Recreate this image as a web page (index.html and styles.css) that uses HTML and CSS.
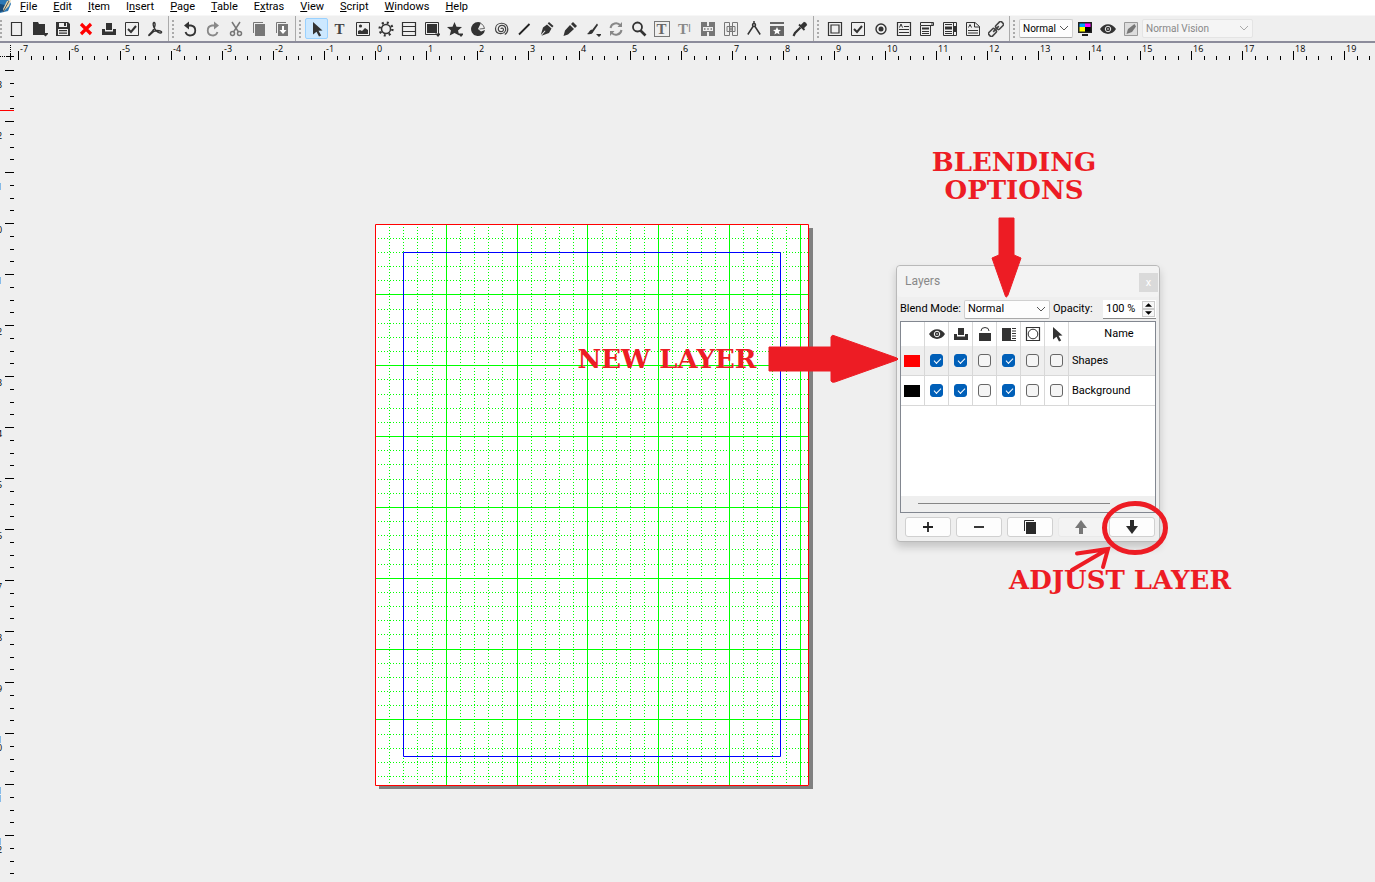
FILE: index.html
```html
<!DOCTYPE html>
<html lang="en">
<head>
<meta charset="utf-8">
<title>Layers</title>
<link rel="stylesheet" href="styles.css">
</head>
<body>
<svg class="sprite" aria-hidden="true">
  <symbol id="new" viewBox="0 0 16 16"><path d="M2.500 1.500h10v13h-10z" fill="none" stroke="#333" stroke-width="1.200"/></symbol>
  <symbol id="open" viewBox="0 0 16 16"><path d="M1 1h5l1 2h6v11H1zM10 12h7l-3.500 3.500z"/></symbol>
  <symbol id="save" viewBox="0 0 16 16"><path fill-rule="evenodd" d="M1 1h12l2 2v12H1zM4 2v4h8V2zM3 8v6h10V8z"/><path d="M9 2h2v3H9zM4 9h8v1.200H4zM4 11.500h8v1.200H4z"/></symbol>
  <symbol id="close" viewBox="0 0 16 16"><path d="M3 3l10 10M13 3L3 13" stroke="#f00" stroke-width="3.200"/></symbol>
  <symbol id="print" viewBox="0 0 16 16"><path d="M5 2h6v7H5zM1 8h3v2.500h8V8h3v6H1z"/></symbol>
  <symbol id="check" viewBox="0 0 16 16"><path d="M1.500 1.500h13v13h-13z" fill="none" stroke="#333"/><path d="M4 8l3 3 5-6" fill="none" stroke="#333" stroke-width="2"/></symbol>
  <symbol id="pdf" viewBox="0 0 16 16"><path d="M7 1.500c2 0 1 5-1 8s-5 4.500-4 5c1.500 0 3-5 8-5 3 0 5 1 4.500 2-1 1.500-6-1-7.500-5C6 4 6 2 7 1.500z" fill="none" stroke="#333" stroke-width="1.400"/></symbol>
  <symbol id="undo" viewBox="0 0 16 16"><path d="M5 4.500h4a5 5 0 1 1-5.500 6.500" fill="none" stroke="#333" stroke-width="1.800"/><path d="M2 4.500L7 .5v8z"/></symbol>
  <symbol id="redo" viewBox="0 0 16 16"><path d="M11 4.500H7a5 5 0 1 0 5.500 6.500" fill="none" stroke="#888" stroke-width="1.800"/><path d="M14 4.500L9 .5v8z" fill="#888"/></symbol>
  <symbol id="cut" viewBox="0 0 16 16"><g fill="none" stroke="#777" stroke-width="1.500"><path d="M4 1l6.500 10M12 1L5.500 11"/><circle cx="4.500" cy="12.500" r="2"/><circle cx="11.500" cy="12.500" r="2"/></g></symbol>
  <symbol id="copy" viewBox="0 0 16 16"><path d="M2.500 12V1.500H12" fill="none" stroke="currentColor"/><path d="M4 3h10v12H4z" fill="currentColor"/></symbol>
  <symbol id="paste" viewBox="0 0 16 16"><path d="M2.500 12V1.500H12" fill="none" stroke="#777"/><path d="M4 3h10v12H4z" fill="#777"/><path d="M8 5h2v4h2.500L9 13 5.500 9H8z" fill="#fff"/></symbol>
  <symbol id="arrow" viewBox="0 0 16 16"><path d="M4 1l9.500 8.500-4 .3 2.700 4.600-2.200 1.100-2.500-4.800L4 13.500z"/></symbol>
  <symbol id="image" viewBox="0 0 16 16"><path d="M1.500 1.500h13v13h-13z" fill="none" stroke="#333"/><path d="M3 13v-3l2-1 2 1 3-3 3 2v4z"/><circle cx="5.500" cy="5" r="1.600"/></symbol>
  <symbol id="gear" viewBox="0 0 16 16"><g fill="none" stroke="#333"><circle cx="8" cy="8" r="4.500" stroke-width="1.500"/><circle cx="8" cy="8" r="6.400" stroke-width="2.400" stroke-dasharray="2 3.027"/></g></symbol>
  <symbol id="rows" viewBox="0 0 16 16"><path d="M1.500 1.500h13v13h-13zM1.500 5.500h13M1.500 10.500h13" fill="none" stroke="#333" stroke-width="1.200"/></symbol>
  <symbol id="shape" viewBox="0 0 16 16"><path d="M1.500 1.500h13v12h-13z" fill="none" stroke="#333"/><path d="M3 3h10v9H3zM11 12.500h6L14 16z"/></symbol>
  <symbol id="star" viewBox="0 0 16 16"><path d="M7.500 1l2 4.700 5.500.4-4 3.500 1.300 5-4.800-2.700L2.700 14.600 4 9.600 0 6.100l5.500-.4zM11 12.500h6L14 16z"/></symbol>
  <symbol id="pie" viewBox="0 0 16 16"><path d="M8 8l3-6.300A7 7 0 1 0 15 9l-4 1.500z"/><path d="M11 2.500q3 1.500 3.500 5L9.500 8" fill="none" stroke="#666" stroke-width="1"/></symbol>
  <symbol id="spiral" viewBox="0 0 16 16"><path d="M8 8c0-1.500 2.500-1.200 2.500.5 0 3-5.200 2.800-5.200-.5C5.300 3 12.700 3.200 12.700 8.300c0 6-10.200 5.800-10.200-.5C2.500.5 14.800.2 14.800 8c0 2.500-1.300 4.500-3 5.500" fill="none" stroke="#444" stroke-width="1.200"/></symbol>
  <symbol id="line" viewBox="0 0 16 16"><path d="M3 13.500L13.500 3" stroke="#222" stroke-width="1.800"/></symbol>
  <symbol id="pen" viewBox="0 0 16 16"><path d="M10 1l4.500 4-1.300 1.500-4.500-4zM8 3.500L12.500 7.500 10 12l-7.500 2.800 4-4.800-.7-.6-4 4.600L4 6.500z"/></symbol>
  <symbol id="pencil" viewBox="0 0 16 16"><path d="M11 1l4 4-2 2-4-4zM8 4l4 4-6 5.500L1.500 15 3 9.500z"/></symbol>
  <symbol id="brush" viewBox="0 0 16 16"><path d="M12 2.500L7 9l1.500 1.500L13 4zM6.500 8.500l2 2c-1 3-4 3-6.500 2.500 2-.8 2-3.500 4.500-4.500zM11 13h6l-3 3z"/></symbol>
  <symbol id="rotate" viewBox="0 0 16 16"><path d="M2.500 7a5.600 5.600 0 0 1 10-2.500M13.500 9a5.600 5.600 0 0 1-10 2.500" fill="none" stroke="#888" stroke-width="2"/><path d="M14 1v5H9.500zM2 15v-5h4.500z" fill="#888"/></symbol>
  <symbol id="search" viewBox="0 0 16 16"><g fill="none" stroke="#333"><circle cx="6.500" cy="6" r="4.500" stroke-width="1.800"/><path d="M9.500 9.500l5 5" stroke-width="2.600"/></g></symbol>
  <symbol id="link" viewBox="0 0 16 16"><path fill-rule="evenodd" fill="#777" d="M1 1h6v4h2V1h6v14H9v-4H7v4H1zM3 6h10v4H3z"/><path d="M4 8h1.500M7.200 8h1.600M10.500 8H12" stroke="#777" stroke-width="1.500"/></symbol>
  <symbol id="unlink" viewBox="0 0 16 16"><path d="M1.500 1.500h5v13h-5zM9.500 1.500h5v13h-5zM4 5.500h8v5H4zM8 5.500v5M6 8h4" fill="none" stroke="#777"/></symbol>
  <symbol id="measure" viewBox="0 0 16 16"><g fill="none" stroke="#333" stroke-width="1.500"><circle cx="8" cy="4" r="1.500"/><path d="M8 0v2.500M7 5.500L1.800 13.500M9 5.500l5.200 8"/></g></symbol>
  <symbol id="favorite" viewBox="0 0 16 16"><path d="M1 1h14v2H1zM1 5h14v10H1z" fill="#666"/><path d="M8 6l1.200 2.700 2.800.2-2.200 1.800.8 2.800L8 12l-2.600 1.500.8-2.800L4 8.900l2.800-.2z" fill="#fff"/></symbol>
  <symbol id="dropper" viewBox="0 0 16 16"><path d="M12 .8q2.500.2 3.200 3.200l-3.500 3.500-3.200-3.200z"/><path d="M7 3.500L12.500 9" stroke="#333" stroke-width="1.800"/><path d="M8.500 6.500L3 12l-1.500 3" fill="none" stroke="#333" stroke-width="2.200"/></symbol>
  <symbol id="button" viewBox="0 0 16 16"><path d="M1.500 1.500h13v13h-13zM4 4h8v8H4z" fill="none" stroke="#333" stroke-width="1.200"/></symbol>
  <symbol id="radio" viewBox="0 0 16 16"><circle cx="8" cy="8" r="5" fill="none" stroke="#333" stroke-width="1.400"/><circle cx="8" cy="8" r="2.500"/></symbol>
  <symbol id="field" viewBox="0 0 16 16"><g fill="none" stroke="#333"><path d="M1.500 1.500h13v13h-13z" stroke-width="1.200"/><path d="M8 5.500h5M3 8.500h10M3 11.500h10M3.500 6.500L5 3l1.500 3.500"/></g></symbol>
  <symbol id="combo" viewBox="0 0 16 16"><g fill="none" stroke="#333"><path d="M1.500 5v9.500h10V5M1.500 1.500h13v3h-13zM3 10.500h7M3 12.500h7"/><path d="M3 7.500h7" stroke-width="2"/><path d="M12 3h2"/></g></symbol>
  <symbol id="list" viewBox="0 0 16 16"><g fill="none" stroke="#333"><path d="M1.500 1.500h13v13h-13zM11.500 1v14M3 3.500h7M3 10.500h7M3 12.500h7"/><path d="M3 7h7" stroke-width="3"/><path d="M13 5v6" stroke-width="3"/></g></symbol>
  <symbol id="note" viewBox="0 0 16 16"><path d="M1.500 1.500H10l4.500 4v9h-13zM9.500 1.500V6h5M3 9.500h10M3 12h10M3.500 6.500L5 3.500l1.500 3" fill="none" stroke="#333"/></symbol>
  <symbol id="chain" viewBox="0 0 16 16"><g transform="rotate(-45 8 8)" fill="none" stroke="#444" stroke-width="1.600"><rect x="-1" y="5.500" width="8" height="5" rx="1.500"/><rect x="9" y="5.500" width="8" height="5" rx="1.500"/><path d="M4 8h8"/></g></symbol>
  <symbol id="screen" viewBox="0 0 16 16"><path d="M1 1h14v11H1zM5 13h6v2H5z" fill="#222"/><path d="M2.500 2.500H8V6H2.500z" fill="#00a0ff"/><path d="M8 2.500h5.500V6H8z" fill="#f0f"/><path d="M2.500 6H8v4.500H2.500z" fill="#ff0"/><path d="M8 6h5.500v4.500H8z" fill="#000"/></symbol>
  <symbol id="eye" viewBox="0 0 16 16"><path fill-rule="evenodd" d="M0 8c4-6.500 12-6.500 16 0-4 6.500-12 6.500-16 0zM8 4.800a3.200 3.200 0 1 0 .01 0z"/><circle cx="8" cy="8" r="2.200"/><circle cx="8" cy="8" r=".8" fill="#fff"/></symbol>
  <symbol id="edit" viewBox="0 0 16 16"><path d="M1.500 1.500h13v13h-13z" fill="#ddd" stroke="#999"/><path d="M11.500 3L13 5.500 9 11l-5.500 2L5 8z" fill="#777"/></symbol>
  <symbol id="lock" viewBox="0 0 16 16"><path d="M2 7h12v8H2z"/><path d="M4 5a4 3.500 0 0 1 8 0" fill="none" stroke="#333"/></symbol>
  <symbol id="flow" viewBox="0 0 16 16"><path d="M1 2h9v12H1z"/><path d="M11 2.500h4M11 5h4M11 7.500h4M11 10h4M1 14.500h14M11 12.500h4" stroke="#333"/></symbol>
  <symbol id="outline" viewBox="0 0 16 16"><g fill="none" stroke="#333"><path d="M1.500 1.500h13v13h-13z" stroke-width="1.200"/><circle cx="8" cy="8" r="4.800"/></g></symbol>
  <symbol id="plus" viewBox="0 0 16 16"><path d="M3 8h10M8 3v10" stroke="#222" stroke-width="1.800"/></symbol>
  <symbol id="minus" viewBox="0 0 16 16"><path d="M3 8h10" stroke="#222" stroke-width="1.800"/></symbol>
  <symbol id="down" viewBox="0 0 16 16"><path d="M6 1h4v6h4l-6 8-6-8h4z" fill="currentColor"/></symbol>
  <symbol id="up" viewBox="0 0 16 16"><path d="M6 15h4V9h4L8 1 2 9h4z" fill="currentColor"/></symbol>
  <symbol id="chevron" viewBox="0 0 10 6"><path d="M1 1l4 4 4-4" fill="none" stroke="currentColor"/></symbol>
</svg>

<nav class="menu">
  <svg class="logo" viewBox="0 0 12 15" aria-hidden="true"><path d="M0 0h9l2 4-3 7-8 2z" fill="#2c78b4"/><path d="M0 4l5 1-2 6-3 1z" fill="#174a78"/><path d="M11 0L7 1 3 9l1 2 5-5z" fill="#e8d9ae"/><path d="M9 1L3 12" stroke="#555"/></svg>
  <a href="#"><u>F</u>ile</a><a href="#"><u>E</u>dit</a><a href="#"><u>I</u>tem</a><a href="#">I<u>n</u>sert</a><a href="#"><u>P</u>age</a><a href="#"><u>T</u>able</a><a href="#">E<u>x</u>tras</a><a href="#"><u>V</u>iew</a><a href="#"><u>S</u>cript</a><a href="#"><u>W</u>indows</a><a href="#"><u>H</u>elp</a>
</nav>

<div class="toolbar">
  <div class="group first" data-icons="new open save close print check pdf"></div>
  <div class="group" data-icons="undo redo cut copy paste"></div>
  <div class="group" data-icons="arrow text image gear rows shape star pie spiral line pen pencil brush rotate search frame caret link unlink measure favorite dropper"></div>
  <div class="group" data-icons="button check radio field combo list note chain"></div>
  <div class="group last">
    <span class="handle"></span>
    <span class="pick preview"><select aria-label="Preview quality"><option>Normal</option></select><svg><use href="#chevron"/></svg></span>
    <button class="tool" aria-label="Color management"><svg><use href="#screen"/></svg></button>
    <button class="tool" aria-label="Preview mode"><svg><use href="#eye"/></svg></button>
    <button class="tool" aria-label="Edit in preview" disabled><svg><use href="#edit"/></svg></button>
    <span class="pick vision"><select aria-label="Vision" disabled><option>Normal Vision</option></select><svg><use href="#chevron"/></svg></span>
  </div>
</div>

<main class="workspace">
  <svg class="ruler-h" id="ruler-h"></svg>
  <svg class="ruler-v" id="ruler-v"></svg>
  <svg class="sheet" id="sheet" width="438" height="566"></svg>

  <section class="panel">
    <header><h2>Layers</h2><button class="shut" aria-label="Close">x</button></header>
    <div class="options">
      <label for="blend">Blend Mode:</label>
      <span class="pick blend"><select id="blend"><option>Normal</option></select><svg><use href="#chevron"/></svg></span>
      <label for="opacity">Opacity:</label>
      <span class="spin"><input id="opacity" type="text" value="100 %"><span class="steps"><button aria-label="Increase"><svg viewBox="0 0 8 4"><path d="M0 4l4-4 4 4z"/></svg></button><button aria-label="Decrease"><svg viewBox="0 0 8 4"><path d="M0 0l4 4 4-4z"/></svg></button></span></span>
    </div>
    <div class="list">
      <table>
        <thead><tr><th class="c"></th><th class="c"><svg><use href="#eye"/></svg></th><th class="c"><svg><use href="#print"/></svg></th><th class="c"><svg><use href="#lock"/></svg></th><th class="c"><svg><use href="#flow"/></svg></th><th class="c"><svg><use href="#outline"/></svg></th><th class="c"><svg><use href="#arrow"/></svg></th><th class="name">Name</th></tr></thead>
        <tbody>
          <tr class="current"><td><span class="swatch red"></span></td><td><input type="checkbox" aria-label="Shapes visible" checked></td><td><input type="checkbox" aria-label="Shapes printed" checked></td><td><input type="checkbox" aria-label="Shapes locked"></td><td><input type="checkbox" aria-label="Shapes text flow" checked></td><td><input type="checkbox" aria-label="Shapes outline"></td><td><input type="checkbox" aria-label="Shapes selectable"></td><td class="name">Shapes</td></tr>
          <tr><td><span class="swatch"></span></td><td><input type="checkbox" aria-label="Background visible" checked></td><td><input type="checkbox" aria-label="Background printed" checked></td><td><input type="checkbox" aria-label="Background locked"></td><td><input type="checkbox" aria-label="Background text flow" checked></td><td><input type="checkbox" aria-label="Background outline"></td><td><input type="checkbox" aria-label="Background selectable"></td><td class="name">Background</td></tr>
        </tbody>
      </table>
      <div class="scroll"><div class="thumb"></div></div>
    </div>
    <div class="actions">
      <button aria-label="Add layer"><svg><use href="#plus"/></svg></button>
      <button aria-label="Delete layer"><svg><use href="#minus"/></svg></button>
      <button aria-label="Duplicate layer"><svg><use href="#copy"/></svg></button>
      <button aria-label="Raise layer" disabled><svg><use href="#up"/></svg></button>
      <button aria-label="Lower layer"><svg><use href="#down"/></svg></button>
    </div>
  </section>

  <svg class="marks" width="1200" height="600" aria-hidden="true">
    <path d="M999 175h15v37l7 3-13 37q-2 4-3 0l-13-37 7-3z" fill="#ed1c24" stroke="#ed1c24"/>
    <path d="M769 304h62v-10q1-3 4-1l62 22q2 1 0 2l-62 22q-3 1-4-1v-10h-62z" fill="#ed1c24" stroke="#ed1c24"/>
    <g fill="none" stroke="#ed1c24" stroke-linecap="round"><ellipse cx="1135" cy="485" rx="30.500" ry="24.500" stroke-width="5"/><path d="M1072 527l36-21M1077 510.500l31-4.500-5 18" stroke-width="4"/></g>
  </svg>
  <p class="note blending">BLENDING<br>OPTIONS</p>
  <p class="note new-layer">NEW LAYER</p>
  <p class="note adjust">ADJUST LAYER</p>
</main>
<script src="app.js"></script>
</body>
</html>
```
FILE: styles.css
```css
* { box-sizing: border-box; }
body { margin: 0; height: 100vh; display: flex; flex-direction: column; overflow: hidden; background: #efefef; color: #000; font: 11px/14px Roboto, "Open Sans", sans-serif; }
button, select, input { font: inherit; color: inherit; margin: 0; padding: 0; }
svg { display: block; }
.sprite { position: absolute; width: 0; height: 0; }

.menu { display: flex; flex: none; gap: 16px; height: 15px; background: #fff; line-height: 14px; }
.menu .logo { width: 12px; height: 15px; margin-right: -8px; }
.menu a { color: #000; text-decoration: none; }

.toolbar { display: flex; flex: none; height: 28px; border-top: 1px solid #f7f7f7; border-bottom: 2px solid #8c8c9b; background: #efefef; }
.group { display: flex; align-items: center; padding-right: 2px; border-right: 1px solid #aaa; }
.group.last { border: 0; }
.handle { width: 9px; height: 18px; flex: none; background: radial-gradient(circle at 1px 1px, #aaa 1px, transparent 1px) 3px 0 / 4px 4px repeat-y; }
.first .handle { width: 5px; background-position-x: 0; }
.tool { width: 23px; height: 21px; flex: none; display: flex; align-items: center; justify-content: center; border: 1px solid transparent; border-radius: 2px; background: none; }
.tool svg { width: 16px; height: 16px; overflow: visible; fill: #333; }
.tool.on { background: #cce8ff; border-color: #99d1ff; }
.tool.dim { color: #777; }
.letter { font: bold 15px/16px "Liberation Serif", serif; color: #444; }
.framed { width: 16px; height: 16px; border: 1px solid #777; color: #666; line-height: 14px; }
.faded { color: #888; }

.pick { position: relative; display: block; height: 19px; flex: none; }
.pick select { appearance: none; width: 100%; height: 100%; padding-left: 3px; border: 1px solid #d0d0d0; border-bottom-color: #aaa; border-radius: 2px; background: #fdfdfd; }
.pick svg { position: absolute; right: 4px; top: 6px; width: 10px; height: 6px; color: #555; pointer-events: none; }
.preview { width: 54px; font-size: 10px; }
.vision { width: 111px; font-size: 10px; }
.vision select { color: #888; opacity: 1; border-color: #e4e4e4; background: #f5f5f5; }
.vision svg { color: #aaa; }

.workspace { position: relative; flex: 1; overflow: hidden; }
.ruler-h { position: absolute; left: 0; top: 0; width: 100%; height: 18px; }
.ruler-v { position: absolute; left: 0; top: 0; width: 15px; height: 100%; }
.ruler-h text, .ruler-v text { font: 9px "Open Sans", sans-serif; }
.sheet { position: absolute; left: 375px; top: 181px; }

.panel { position: absolute; left: 896px; top: 222px; width: 264px; padding: 0 3px 4px; border: 1px solid #b9b9b9; border-radius: 4px; background: #efefef; box-shadow: 0 5px 8px #0000002e; }
.panel header { display: flex; justify-content: space-between; height: 31px; margin: 0 -3px; padding: 7px 1px 0 8px; border-radius: 4px; background: #f3f3f3; }
.panel h2 { margin: 0; font-size: 12px; font-weight: normal; line-height: 16px; color: #888; }
.shut { width: 19px; height: 19px; border: 0; background: #dadada; color: #fff; line-height: 16px; }
.options { display: flex; align-items: center; height: 24px; white-space: nowrap; }
.blend { width: 86px; margin: 0 3px; }
.spin { display: flex; width: 53px; height: 19px; margin-left: auto; border-bottom: 1px solid #888; background: #fff; }
.spin input { width: 38px; border: 0; padding-left: 3px; background: none; }
.steps { flex: 1; display: flex; flex-direction: column; justify-content: space-between; padding: 1px; }
.steps button { height: 8px; display: flex; align-items: center; justify-content: center; border: 1px solid #ccc; background: #f7f7f7; }
.steps svg { width: 7px; height: 4px; flex: none; }
.list { display: flex; flex-direction: column; justify-content: space-between; height: 192px; border: 1px solid #828790; background: #fff; }
table { width: 100%; border-collapse: separate; border-spacing: 0; table-layout: fixed; }
th, td { padding: 0; border-right: 1px solid #d8d8d8; font-weight: normal; }
th { height: 24px; }
td { height: 30px; border-bottom: 1px solid #d8d8d8; }
.c { width: 24px; }
th svg { width: 16px; height: 16px; margin: 0 auto; fill: #333; }
th.name { padding-left: 14px; border-right: 0; }
td.name { padding-left: 3px; border-right: 0; }
.current { background: #efefef; }
.swatch { display: block; width: 16px; height: 12px; margin: 0 3px; background: #000; }
.swatch.red { background: #f00; }
td input { appearance: none; display: block; width: 13px; height: 13px; margin: 0 auto; border: 1px solid #666; border-radius: 3px; background: #f5f5f5; }
td input:checked { border-color: #005fb8; background: #005fb8; }
td input:checked::after { content: ""; display: block; width: 6px; height: 3px; margin: 3px 0 0 3px; border: solid #fff; border-width: 0 0 1px 1px; rotate: -45deg; }
.scroll { height: 16px; padding: 7px 45px 0 17px; background: #efefef; }
.thumb { height: 1px; background: #868686; }
.actions { display: flex; gap: 5px; padding: 4px 0 0 5px; }
.actions button { width: 46px; height: 20px; display: flex; align-items: center; justify-content: center; border: 1px solid #d0d0d0; border-radius: 3px; background: #fdfdfd; color: #2a2a2a; }
.actions button:disabled { color: #777; background: #f3f3f3; border-color: #e9e9e9; }
.actions svg { width: 16px; height: 16px; }

.marks { position: absolute; left: 0; top: 0; pointer-events: none; }
.note { position: absolute; margin: 0; color: #ed1c24; font: bold 26px/28px "DejaVu Serif", serif; text-align: center; white-space: nowrap; }
.blending { left: 924px; top: 105px; width: 180px; }
.new-layer { left: 567px; top: 302px; width: 200px; }
.adjust { left: 990px; top: 523px; width: 260px; }
```
FILE: app.js
```js
const icon = name => `<svg><use href="#${name}"/></svg>`;
const glyphs = {
  text: '<span class="letter">T</span>',
  frame: '<span class="letter framed">T</span>',
  caret: '<span class="letter faded">T</span><span class="faded">I</span>'
};
document.querySelectorAll('[data-icons]').forEach(group => {
  group.innerHTML = '<span class="handle"></span>' + group.dataset.icons.split(' ').map(name => {
    const state = name === 'arrow' ? ' on' : name === 'copy' ? ' dim' : '';
    return `<button class="tool${state}" aria-label="${name}">${glyphs[name] || icon(name)}</button>`;
  }).join('');
});

const rect = (x, y, w, h, fill = '#000') => `<rect x="${x}" y="${y}" width="${w}" height="${h}" fill="${fill}"/>`;
const unit = 51;

function drawRulers() {
  let across = '<path d="M10.500 2v16M0 13.500h14" stroke="#000" stroke-dasharray="1 1"/><path d="M10.500 10v7M7 13.500h7" stroke="#000"/>';
  for (let n = -7; 375 + n * unit < innerWidth - 12; n++) {
    const x = 375 + n * unit;
    across += rect(x, 8, 1, 9) + [13, 25, 38].map(d => rect(x + d, 13, 1, 4)).join('');
    across += `<text x="${x + 2}" y="9">${n}</text>`;
  }
  document.getElementById('ruler-h').innerHTML = across;

  let downward = rect(0, 67, 14, 1, '#f00');
  for (let n = -3; 180 + n * unit < innerHeight - 60; n++) {
    const y = 180 + n * unit;
    downward += rect(5, y, 9, 1) + [13, 26, 38].map(d => rect(10, y + d, 4, 1)).join('');
    downward += [...String(n)].map((c, i) => `<text x="-3" y="${y + 10 + i * 8}">${c}</text>`).join('');
  }
  document.getElementById('ruler-v').innerHTML = downward;
}
drawRulers();
addEventListener('resize', drawRulers);

const step = 14.168;
let grid = rect(4, 4, 434, 561, '#808080') + rect(0, 0, 434, 562, '#fff');
const rule = (i, vertical, length) => {
  const p = Math.floor(i * step + (vertical ? 0.4 : 0)) + 0.5;
  const dash = i % 5 ? ' stroke-dasharray="1 2"' : '';
  return `<path d="${vertical ? `M${p} 0v${length}` : `M0 ${p}h${length}`}" stroke="#0f0"${dash}/>`;
};
for (let i = 1; i * step < 433; i++) grid += rule(i, true, 562);
for (let i = 1; i * step < 561; i++) grid += rule(i, false, 434);
grid += '<path d="M28.500 28.500h377v504h-377z" fill="none" stroke="#00f"/><path d="M.5.5h433v561H.5z" fill="none" stroke="#f00"/>';
document.getElementById('sheet').innerHTML = grid;
```
